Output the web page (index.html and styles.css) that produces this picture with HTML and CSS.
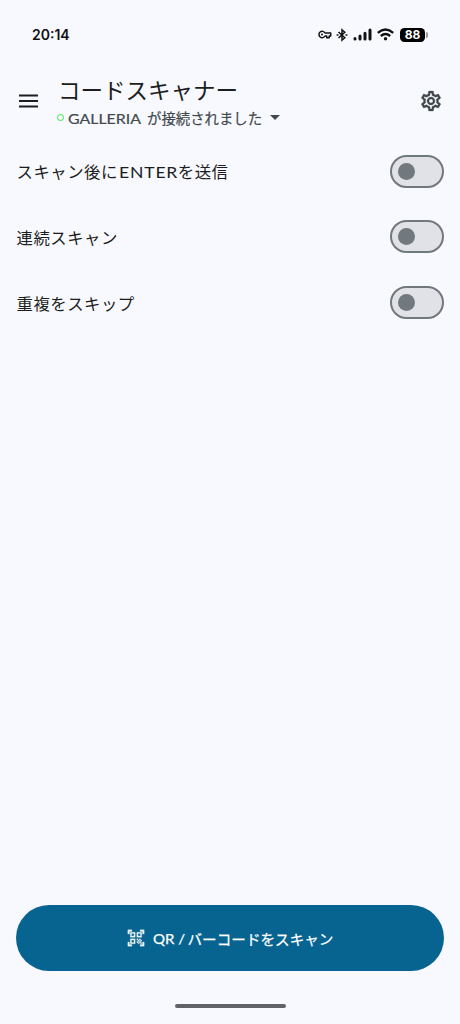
FILE: index.html
```html
<!DOCTYPE html>
<html lang="ja">
<head>
<meta charset="utf-8">
<title>コードスキャナー</title>
<link rel="stylesheet" href="styles.css">
</head>
<body>
<div class="screen">
  <div class="status">
    <span class="clock">20:14</span>
    <div class="status-icons">
      <svg class="key" width="14" height="9" viewBox="0 0 14 9" fill="none" stroke="#111" stroke-width="1.5" stroke-linejoin="round"><path d="M7 3A3.2 3.2 0 1 0 7 6h1.7v1.700h2.500V6h1.500V3Z"/><circle cx="4" cy="4.5" r="1" fill="#111" stroke="none"/></svg>
      <svg class="bt" width="12" height="14" viewBox="0 0 12 14" fill="none" stroke="#111" stroke-width="1.5"><path d="M2.500 4l6.300 5.800L6 12.200V1.800l2.800 2.400L2.500 10"/><path d="M.6 7h1.900M9.500 7h1.900"/></svg>
      <svg class="signal" width="19" height="13" viewBox="0 0 19 13" stroke="#111" stroke-width="3" stroke-linecap="round"><path d="M2 10.500v.5M7 8v3M12 5.200v5.800M17 2v9"/></svg>
      <svg class="wifi" width="17" height="13" viewBox="0 0 17 13" fill="none" stroke="#111" stroke-width="2.300"><path d="M.8 4.800Q8.500-1.700 16.200 4.800M3.800 8Q8.500 4 13.200 8"/><circle cx="8.500" cy="10.700" r="1.700" fill="#111" stroke="none"/></svg>
      <span class="battery">88</span><i class="cap"></i>
    </div>
  </div>
  <header class="bar">
    <svg class="menu" width="19" height="14" viewBox="0 0 19 14" fill="#1b1d20"><path d="M0 .4h19v2H0zM0 6h19v2H0zM0 11.600h19v2H0z"/></svg>
    <div class="heading">
      <h1>コードスキャナー</h1>
      <div class="device"><i class="dot"></i><span class="latin name">GALLERIA</span><span>が接続されました</span><i class="arrow"></i></div>
    </div>
    <svg class="gear" width="24" height="24" viewBox="0 0 24 24" fill="#41484d" stroke="#41484d" stroke-width=".3"><path d="M19.43 12.98c.04-.32.07-.64.07-.98 0-.34-.03-.66-.07-.98l2.11-1.65c.19-.15.24-.42.12-.64l-2-3.46c-.09-.16-.26-.25-.44-.25-.06 0-.12.01-.17.03l-2.49 1c-.52-.4-1.08-.73-1.69-.98l-.38-2.65C14.46 2.18 14.25 2 14 2h-4c-.25 0-.46.18-.49.42l-.38 2.65c-.61.25-1.17.59-1.69.98l-2.49-1c-.06-.02-.12-.03-.18-.03-.17 0-.34.09-.43.25l-2 3.46c-.13.22-.07.49.12.64l2.11 1.65c-.04.32-.07.65-.07.98 0 .33.03.66.07.98l-2.11 1.65c-.19.15-.24.42-.12.64l2 3.46c.09.16.26.25.44.25.06 0 .12-.01.17-.03l2.49-1c.52.4 1.08.73 1.69.98l.38 2.65c.03.24.24.42.49.42h4c.25 0 .46-.18.49-.42l.38-2.65c.61-.25 1.17-.59 1.69-.98l2.49 1c.06.02.12.03.18.03.17 0 .34-.09.43-.25l2-3.46c.12-.22.07-.49-.12-.64l-2.11-1.65zm-1.98-1.71c.04.31.05.52.05.73 0 .21-.02.43-.05.73l-.14 1.13.89.7 1.08.84-.7 1.21-1.27-.51-1.04-.42-.9.68c-.43.32-.84.56-1.25.73l-1.06.43-.16 1.13-.2 1.35h-1.4l-.19-1.35-.16-1.13-1.06-.43c-.43-.18-.83-.41-1.23-.71l-.91-.7-1.06.43-1.27.51-.7-1.21 1.08-.84.89-.7-.14-1.13c-.03-.31-.05-.54-.05-.74s.02-.43.05-.73l.14-1.13-.89-.7-1.08-.84.7-1.21 1.27.51 1.04.42.9-.68c.43-.32.84-.56 1.25-.73l1.06-.43.16-1.13.2-1.35h1.39l.19 1.35.16 1.13 1.06.43c.43.18.83.41 1.23.71l.91.7 1.06-.43 1.27-.51.7 1.21-1.07.85-.89.7.14 1.13zM12 8c-2.21 0-4 1.79-4 4s1.79 4 4 4 4-1.79 4-4-1.79-4-4-4zm0 6c-1.1 0-2-.9-2-2s.9-2 2-2 2 .9 2 2-.9 2-2 2z"/></svg>
  </header>
  <main class="options">
    <div class="row"><span>スキャン後に<span class="latin enter">ENTER</span>を送信</span><i class="switch"></i></div>
    <div class="row"><span>連続スキャン</span><i class="switch"></i></div>
    <div class="row"><span>重複をスキップ</span><i class="switch"></i></div>
  </main>
  <div class="scan">
    <svg width="18" height="18" viewBox="1 1 22 22" fill="#e9f2f8" stroke="#e9f2f8" stroke-width=".35"><path d="M9.5 6.5v3h-3v-3h3M11 5H5v6h6V5zM9.5 14.5v3h-3v-3h3M11 13H5v6h6v-6zM17.500 6.500v3h-3v-3h3M19 5h-6v6h6V5zM13 13h1.500v1.500H13V13zM14.500 14.500H16V16h-1.500v-1.500zM16 13h1.500v1.500H16V13zM13 16h1.500v1.500H13V16zM14.500 17.500H16V19h-1.500v-1.500zM16 16h1.500v1.500H16V16zM17.500 14.500H19V16h-1.500v-1.500zM17.500 17.500H19V19h-1.500v-1.500zM22 7h-2V4h-3V2h5v5zM22 22v-5h-2v3h-3v2h5zM2 22h5v-2H4v-3H2v5zM2 2v5h2V4h3V2H2z"/></svg>
    <span class="latin qr">QR /</span><span>バーコードをスキャン</span>
  </div>
  <div class="home"></div>
</div>
</body>
</html>
```

FILE: styles.css
```css
* { box-sizing: border-box; }
body { margin: 0; background: #f8f9fe; color: #1b1d20; font-family: "Noto Sans CJK JP", sans-serif; }
.screen { width: 460px; height: 1024px; display: flex; flex-direction: column; }
.latin { display: inline-block; font-family: Lato, "Noto Sans CJK JP", sans-serif; white-space: nowrap; transform-origin: left center; }

.status { height: 69px; padding: 0 32px; display: flex; align-items: center; justify-content: space-between; }
.clock { font: 600 14px/20px Inter, sans-serif; color: #111; }
.status-icons { display: flex; align-items: center; }
.bt { margin-left: 4px; }
.signal { margin-left: 5px; }
.wifi { margin-left: 5px; }
.battery { margin-left: 6px; width: 25px; height: 14px; border-radius: 4.5px; background: #000; color: #fff; font: 700 12px/14px Inter, sans-serif; text-align: center; }
.cap { width: 2px; height: 6px; margin-left: 1px; border-radius: 0 2px 2px 0; background: #999; }

.bar { height: 69.5px; padding: 0 17px 0 19px; display: flex; }
.menu { margin-top: 25px; }
.heading { flex: 1; margin-left: 19px; }
.heading h1 { margin: 5px 0 0 1px; font-size: 22.5px; line-height: 30px; font-weight: 400; }
.device { height: 22px; margin-top: 3px; display: flex; align-items: center; color: #41484d; font-size: 14.4px; line-height: 22px; -webkit-text-stroke: .2px #41484d; }
.dot { width: 7px; height: 7px; margin: 0 4px 1px 0; border: 1.5px solid #2fee3d; border-radius: 50%; }
.name { width: 79px; padding-top: 2px; font-size: 14.2px; transform: scaleX(1.12); }
.arrow { margin: 0 0 1px 8px; border: 5px solid transparent; border-top-color: #41484d; border-bottom: 0; }
.gear { margin: 20px 0 0; width: 24px; height: 24px; }

.options { flex: 1; }
.row { height: 65.6px; padding: 0 16px 0 16.5px; display: flex; align-items: center; justify-content: space-between; font-size: 16.4px; letter-spacing: .5px; line-height: 24px; }
.row > span { padding-top: .8px; }
.enter { width: 60px; padding-left: 1px; font-size: 16px; letter-spacing: .7px; transform: scaleX(1.1); }
.switch { width: 54px; height: 33px; padding: 6px; display: block; border: 2px solid #71787e; border-radius: 17px; background: #e1e2e7; }
.switch::before { content: ""; display: block; width: 17px; height: 17px; border-radius: 50%; background: #71787e; }

.scan { height: 66px; margin: 0 16px; display: flex; align-items: center; justify-content: center; border-radius: 33px; background: #07638f; color: #fff; font-size: 14.6px; -webkit-text-stroke: .25px #fff; }
.qr { width: 35px; margin-left: 8px; font-size: 14.2px; transform: scaleX(1.06); }
.home { width: 111px; height: 4px; margin: 33px auto 16px; border-radius: 2px; background: #626366; }
```
